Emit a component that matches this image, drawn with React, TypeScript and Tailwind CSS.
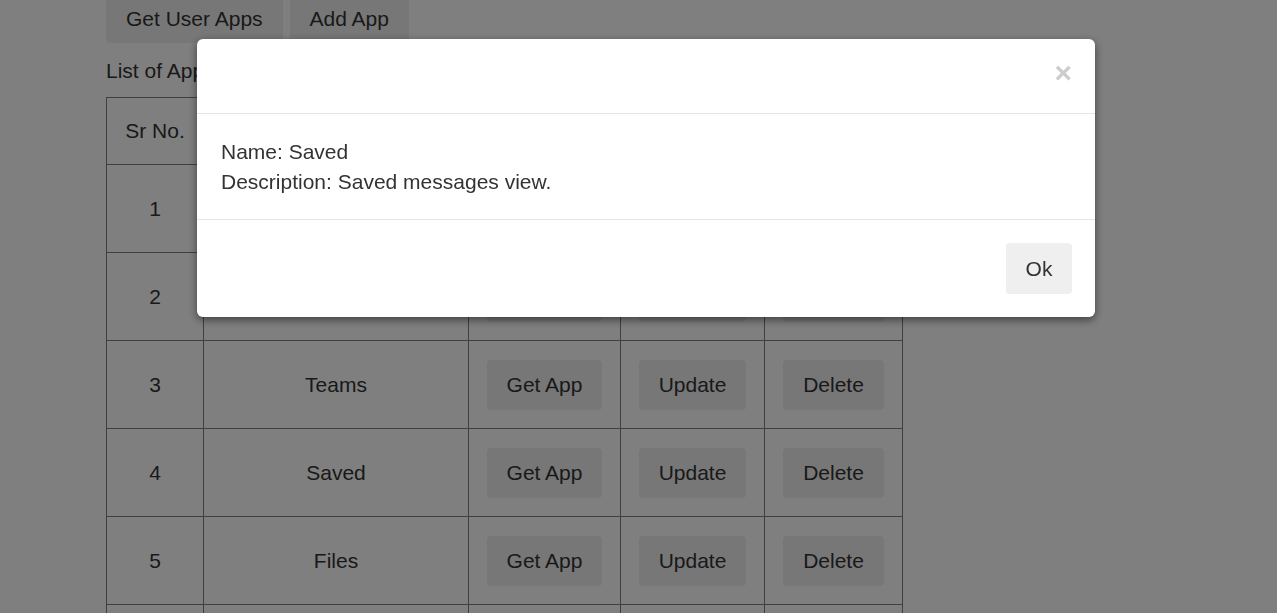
import React, { useState } from 'react';

const APPS = [
  { id: 1, name: 'Activity', description: 'Activity feed view.' },
  { id: 2, name: 'Chat', description: 'Chat view.' },
  { id: 3, name: 'Teams', description: 'Teams view.' },
  { id: 4, name: 'Saved', description: 'Saved messages view.' },
  { id: 5, name: 'Files', description: 'Files view.' },
  { id: 6, name: 'Calls', description: 'Calls view.' },
];

const btn = 'h-[50px] px-5 bg-[#efefef] rounded-[4px] text-[21px] text-[#333] leading-none';

export default function App() {
  const [selected, setSelected] = useState<(typeof APPS)[number] | null>(APPS[3]);

  return (
    <div className="relative min-h-[613px] bg-white font-['Liberation_Sans',Arial,sans-serif] text-[#333] overflow-hidden">
      <div className="pl-[106px]">
        {/* Top actions */}
        <div className="flex gap-[7px] -mt-[7px]">
          <button className={btn}>Get User Apps</button>
          <button className={btn}>Add App</button>
        </div>

        <div className="mt-4 mb-[15px] text-[21px] leading-[23px]">List of Apps</div>

        <table className="table-fixed border-collapse text-[21px] w-[796px]">
          <colgroup>
            <col className="w-[97px]" />
            <col className="w-[265px]" />
            <col className="w-[152px]" />
            <col className="w-[144px]" />
            <col className="w-[138px]" />
          </colgroup>
          <thead>
            <tr className="h-[67px]">
              <th className="border border-[#808080] font-normal">Sr No.</th>
              <th className="border border-[#808080] font-normal">Name</th>
              <th className="border border-[#808080] font-normal">Get</th>
              <th className="border border-[#808080] font-normal">Update</th>
              <th className="border border-[#808080] font-normal">Delete</th>
            </tr>
          </thead>
          <tbody>
            {APPS.map((app) => (
              <tr key={app.id} className="h-[88px]">
                <td className="border border-[#808080] text-center">{app.id}</td>
                <td className="border border-[#808080] text-center">{app.name}</td>
                <td className="border border-[#808080] text-center">
                  <button className={btn} onClick={() => setSelected(app)}>Get App</button>
                </td>
                <td className="border border-[#808080] text-center">
                  <button className={btn}>Update</button>
                </td>
                <td className="border border-[#808080] text-center">
                  <button className={btn}>Delete</button>
                </td>
              </tr>
            ))}
          </tbody>
        </table>
      </div>

      {selected && (
        <div className="fixed inset-0 bg-black/50">
          <div className="absolute left-[197px] top-[39px] w-[898px] bg-white rounded-[6px] shadow-[0_3px_9px_rgba(0,0,0,0.5)]">
            {/* Header */}
            <div className="h-[75px] border-b border-[#e5e5e5] flex items-center justify-end pr-[23px]">
              <button onClick={() => setSelected(null)} className="text-[30px] font-bold leading-none text-[#cccccc] -mt-[6px]">
                ×
              </button>
            </div>
            {/* Body */}
            <div className="px-6 pt-[23px] pb-[22px] text-[21px] leading-[30px] border-b border-[#e5e5e5]">
              <div>Name: {selected.name}</div>
              <div>Description: {selected.description}</div>
            </div>
            {/* Footer */}
            <div className="flex justify-end p-[23px]">
              <button onClick={() => setSelected(null)} className="h-[51px] w-[66px] bg-[#efefef] rounded-[4px] text-[21px] text-[#333]">
                Ok
              </button>
            </div>
          </div>
        </div>
      )}
    </div>
  );
}
